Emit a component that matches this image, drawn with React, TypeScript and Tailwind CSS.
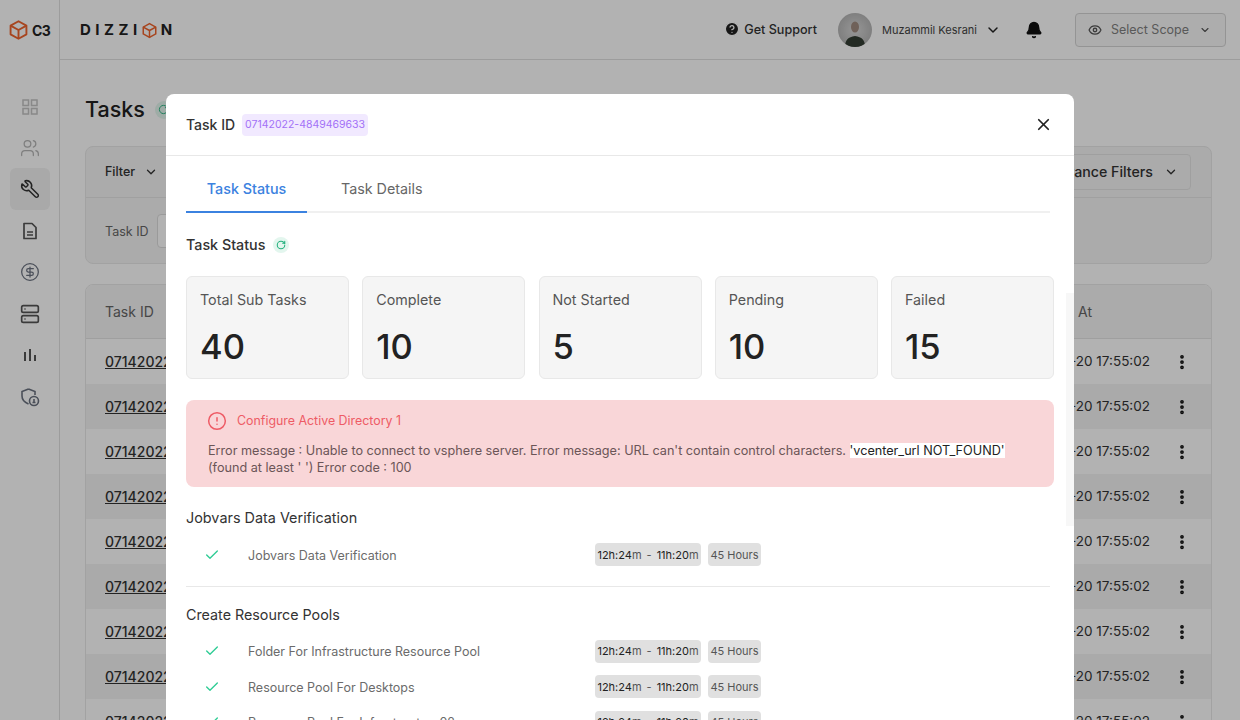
import { Bell, Check, ChevronDown, CircleAlert, CircleDollarSign, CircleHelp, Eye, MoreVertical, RotateCw, Server, Users, Wrench, X } from 'lucide-react';

function Cube({ className }: { className?: string }) {
  return (
    <svg viewBox="0 0 24 26" fill="none" stroke="#f0642d" strokeWidth="2.4" strokeLinejoin="round" className={className}>
      <path d="M12 2 22 7.500v11L12 24 2 18.500v-11z" />
      <path d="M2 7.500 12 13l10-5.500M12 13v11" />
    </svg>
  );
}

function ShieldCoin() {
  return (
    <svg viewBox="0 0 20 20" fill="none" stroke="#6b7280" strokeWidth="1.6" className="h-[20px] w-[20px]">
      <path d="M8.500 2 15 4.500V8M8.500 2 2 4.500V9c0 4 3 6.500 6.500 8" />
      <circle cx="14" cy="14" r="4.500" />
      <path d="M14 12v3.500M12.500 15.500h3" />
    </svg>
  );
}

function DocIcon() {
  return (
    <svg viewBox="0 0 16 18" fill="none" stroke="#555" strokeWidth="1.7" strokeLinejoin="round" className="h-[18px] w-[16px]">
      <path d="M2 1.500h8l4 4v11H2z" />
      <path d="M5 10h6M5 13h6" />
    </svg>
  );
}

function BarsIcon() {
  return (
    <svg viewBox="0 0 14 14" fill="#555" className="h-[14px] w-[14px]">
      <rect x="1" y="4" width="2" height="9" />
      <rect x="6" y="1" width="2" height="12" />
      <rect x="11" y="7" width="2" height="6" />
    </svg>
  );
}

function GridIcon() {
  return (
    <svg viewBox="0 0 16 16" fill="none" stroke="#c4c4c4" strokeWidth="1.500" className="h-[16px] w-[16px]">
      <rect x="1" y="1" width="5.500" height="5.500" />
      <rect x="9.500" y="1" width="5.500" height="5.500" />
      <rect x="1" y="9.500" width="5.500" height="5.500" />
      <rect x="9.500" y="9.500" width="5.500" height="5.500" />
    </svg>
  );
}

function Sidebar() {
  return (
    <aside className="flex w-[60px] shrink-0 flex-col items-center border-r border-[#e0e0e0] bg-white">
      <div className="flex h-[60px] w-full items-center gap-[4px] pl-[9px]">
        <Cube className="h-[22px] w-[19px]" />
        <span className="text-[14px] font-bold tracking-[-0.5px] text-[#222]">C3</span>
      </div>
      <div className="mt-[26px] flex flex-col items-center">
        <div className="flex h-[41px] items-center justify-center"><GridIcon /></div>
        <div className="flex h-[41px] items-center justify-center"><Users className="h-[20px] w-[20px] text-[#b5b5b5]" strokeWidth={1.500} /></div>
        <div className="flex h-[42px] w-[40px] items-center justify-center rounded-md bg-[#f2f2f2]"><Wrench className="h-[20px] w-[20px] -scale-x-100 text-[#333]" strokeWidth={1.800} /></div>
        <div className="flex h-[41px] items-center justify-center"><DocIcon /></div>
        <div className="flex h-[42px] items-center justify-center"><CircleDollarSign className="h-[20px] w-[20px] text-[#6b7280]" strokeWidth={1.500} /></div>
        <div className="flex h-[41px] items-center justify-center"><Server className="h-[20px] w-[20px] text-[#555]" strokeWidth={2} /></div>
        <div className="flex h-[42px] items-center justify-center"><BarsIcon /></div>
        <div className="flex h-[42px] items-center justify-center"><ShieldCoin /></div>
      </div>
    </aside>
  );
}

function Header() {
  return (
    <header className="flex h-[60px] shrink-0 items-center border-b border-[#e0e0e0] bg-white pl-[20px] pr-[14px]">
      <div className="flex items-center pt-[1px] text-[15px] font-bold tracking-[4.500px] text-[#222]">
        DIZZI
        <Cube className="mr-[4px] h-[17px] w-[15px]" />
        N
      </div>
      <div className="ml-auto flex items-center gap-[4px] text-[12.600px] font-medium text-[#333]">
        <CircleHelp className="h-[16px] w-[16px] fill-[#222] text-white" strokeWidth={2} />
        <span className="pt-[2px]">Get Support</span>
      </div>
      <div className="ml-[21px] h-[34px] w-[34px] overflow-hidden rounded-full bg-[radial-gradient(circle,#d8d8d8,#a8a8a8)]">
        <svg viewBox="0 0 34 34" className="h-[34px] w-[34px]">
          <ellipse cx="17" cy="14" rx="4" ry="5.500" fill="#a08c80" />
          <path d="M7 34c0-7 3-10 10-11 7 1 10 4 10 11z" fill="#333d33" />
        </svg>
      </div>
      <span className="ml-[10px] pt-[1px] text-[11px] text-[#444]">Muzammil Kesrani</span>
      <ChevronDown className="ml-[8px] h-[16px] w-[16px] text-[#222]" strokeWidth={2.200} />
      <Bell className="ml-[24px] h-[18px] w-[18px] fill-[#111] text-[#111]" />
      <div className="ml-[32px] flex h-[34px] w-[151px] items-center rounded border border-[#d5d5d5] bg-[#f8f8f8] pl-[12px] pr-[14px] text-[12.500px] text-[#808080]">
        <Eye className="h-[14px] w-[14px] text-[#555]" strokeWidth={2.200} />
        <span className="ml-[9px] pt-[2px]">Select Scope</span>
        <ChevronDown className="ml-auto h-[12px] w-[12px] text-[#555]" strokeWidth={2.200} />
      </div>
    </header>
  );
}

function Background() {
  const rows = Array.from({ length: 9 });
  return (
    <main className="flex-1 pl-[25px] pr-[28px]">
      <div className="flex h-[86px] items-center gap-[10px] pt-[13px]">
        <h1 className="text-[21.500px] font-medium text-[#222]">Tasks</h1>
        <div className="flex h-[18px] w-[18px] items-center justify-center rounded-full bg-[#e3f6ee]">
          <RotateCw className="h-[11px] w-[11px] text-[#22b07d]" />
        </div>
      </div>
      <section className="h-[118px] rounded-lg border border-[#e8e8e8] bg-[#f5f5f5]">
        <div className="flex h-[51px] items-center justify-between border-b border-[#e6e6e6] pl-[19px] pr-[20px]">
          <div className="flex items-center gap-[9px] text-[12.500px] font-medium text-[#333]">
            Filter
            <ChevronDown className="h-[14px] w-[14px]" strokeWidth={2.200} />
          </div>
          <div className="flex h-[36px] w-[200px] items-center justify-end gap-[11px] rounded border border-[#e4e4e4] pr-[12px] text-[14.200px] font-medium text-[#333]">
            Advance Filters
            <ChevronDown className="h-[14px] w-[14px]" strokeWidth={2.200} />
          </div>
        </div>
        <div className="flex h-[65px] items-center pl-[19px] text-[12.500px] text-[#666]">
          <span className="pt-[3px]">Task ID</span>
          <div className="ml-[8px] h-[34px] w-[100px] rounded border border-[#ddd] bg-white" />
        </div>
      </section>
      <section className="mt-[20px] overflow-hidden rounded-t-lg border border-[#e8e8e8]">
        <div className="flex h-[54px] items-center justify-between border-b border-[#e4e4e4] bg-[#f5f5f5] pl-[19px] text-[14px] text-[#666]">
          Task ID
          <span className="mr-[119px]">At</span>
        </div>
        {rows.map((_, i) => (
          <div key={i} className={`flex h-[45px] items-center justify-between pl-[19px] pr-[20px] ${i % 2 ? 'bg-[#f4f4f4]' : 'bg-white'}`}>
            <span className="text-[14px] font-medium text-[#333] underline">07142022-4849469633</span>
            <div className="flex items-center gap-[23px] text-[13.500px] text-[#333]">
              <span>2022-07-20 17:55:02</span>
              <MoreVertical className="h-[18px] w-[18px] text-[#111]" strokeWidth={3} />
            </div>
          </div>
        ))}
      </section>
    </main>
  );
}

function StatCard({ label, value }: { label: string; value: number }) {
  return (
    <div className="flex h-[103px] w-[163px] flex-col rounded-md border border-[#e8e8e8] bg-[#f5f5f5] pl-[13px] pt-[12px]">
      <span className="text-[14.300px] text-[#555]">{label}</span>
      <span className="mt-[15px] text-[34.500px] font-medium leading-[44px] text-[#222]">{value}</span>
    </div>
  );
}

function TimeChips() {
  return (
    <div className="flex items-center gap-[7px] text-[11px]">
      <div className="flex h-[23px] w-[106px] items-center justify-center gap-[5px] rounded bg-[#e0e0e0] text-[#555]">
        <span><span className="text-[#222]">12h:24</span>m</span>
        <span>-</span>
        <span><span className="text-[#222]">11h:20</span>m</span>
      </div>
      <div className="flex h-[23px] w-[53px] items-center justify-center rounded bg-[#e0e0e0] text-[#555]">45 Hours</div>
    </div>
  );
}

function SubTask({ name }: { name: string }) {
  return (
    <div className="flex h-[35.500px] items-center">
      <Check className="ml-[18px] h-[16px] w-[16px] text-[#2ecc94]" strokeWidth={2} />
      <span className="ml-[28px] w-[347px] pt-[3px] text-[12.500px] text-[#6b6b6b]">{name}</span>
      <TimeChips />
    </div>
  );
}

function Modal() {
  return (
    <div className="absolute left-[166px] top-[94px] h-[640px] w-[908px] rounded-lg bg-white">
      <div className="flex h-[62px] items-center border-b border-[#e8e8e8] pl-[20px] pr-[21px]">
        <span className="text-[14px] font-medium text-[#333]">Task ID</span>
        <span className="ml-[7px] flex h-[22px] items-center rounded bg-[#f1e9ff] px-[3px] text-[10.500px] text-[#a371f7]">07142022-4849469633</span>
        <X className="ml-auto h-[19px] w-[19px] text-[#222]" strokeWidth={2.200} />
      </div>
      {/* scrollbar */}
      <div className="absolute right-0 top-[90px] h-[342px] w-[8px] bg-[#f7f7f7]">
        <div className="h-[109px] bg-white" />
      </div>
      <div className="pl-[20px] pr-[24px]">
        <div className="flex h-[57px] border-b-2 border-[#f0f0f0]">
          <div className="-mb-[2px] flex w-[121px] items-center justify-center border-b-2 border-[#3b82e0] pt-[10px] text-[14.300px] font-medium text-[#3b82e0]">Task Status</div>
          <div className="ml-[34px] flex items-center pt-[10px] text-[14.300px] text-[#666]">Task Details</div>
        </div>
        <div className="flex h-[63px] items-center gap-[8px] pt-[1px]">
          <span className="text-[14.300px] font-medium text-[#333]">Task Status</span>
          <div className="flex h-[16px] w-[16px] items-center justify-center rounded-full bg-[#e3f6ee]">
            <RotateCw className="h-[10px] w-[10px] text-[#22b07d]" strokeWidth={2.500} />
          </div>
        </div>
        <div className="flex w-[868px] justify-between">
          <StatCard label="Total Sub Tasks" value={40} />
          <StatCard label="Complete" value={10} />
          <StatCard label="Not Started" value={5} />
          <StatCard label="Pending" value={10} />
          <StatCard label="Failed" value={15} />
        </div>
        <div className="mt-[21px] h-[87px] w-[868px] rounded-lg bg-[#f9d6d8] pl-[22px] pr-[20px] pt-[11px]">
          <div className="-ml-[1px] flex items-center gap-[10px] text-[12.400px] text-[#ee5b65]">
            <CircleAlert className="h-[20px] w-[20px]" strokeWidth={1.800} />
            Configure Active Directory 1
          </div>
          <p className="mt-[11px] text-[12.650px] leading-[17px] text-[#6b5557]">
            Error message : Unable to connect to vsphere server. Error message: URL can't contain control characters.{' '}
            <span className="bg-white text-[#222]">'vcenter_url NOT_FOUND'</span>
            <br />
            (found at least ' ') Error code : 100
          </p>
        </div>
        <h3 className="mt-[22px] text-[14.400px] leading-[18px] text-[#333]">Jobvars Data Verification</h3>
        <div className="mt-[10px] border-b border-[#e8e8e8] pb-[13px]">
          <SubTask name="Jobvars Data Verification" />
        </div>
        <h3 className="mt-[19px] text-[14.300px] leading-[18px] text-[#333]">Create Resource Pools</h3>
        <div className="mt-[10px]">
          <SubTask name="Folder For Infrastructure Resource Pool" />
          <SubTask name="Resource Pool For Desktops" />
          <SubTask name="Resource Pool For Infrastructure02" />
        </div>
      </div>
    </div>
  );
}

export default function App() {
  return (
    <div className="relative flex h-[720px] w-[1240px] overflow-hidden bg-white font-['Inter',sans-serif]">
      <Sidebar />
      <div className="flex min-w-0 flex-1 flex-col">
        <Header />
        <Background />
      </div>
      <div className="absolute inset-0 bg-black/30" />
      <Modal />
    </div>
  );
}
